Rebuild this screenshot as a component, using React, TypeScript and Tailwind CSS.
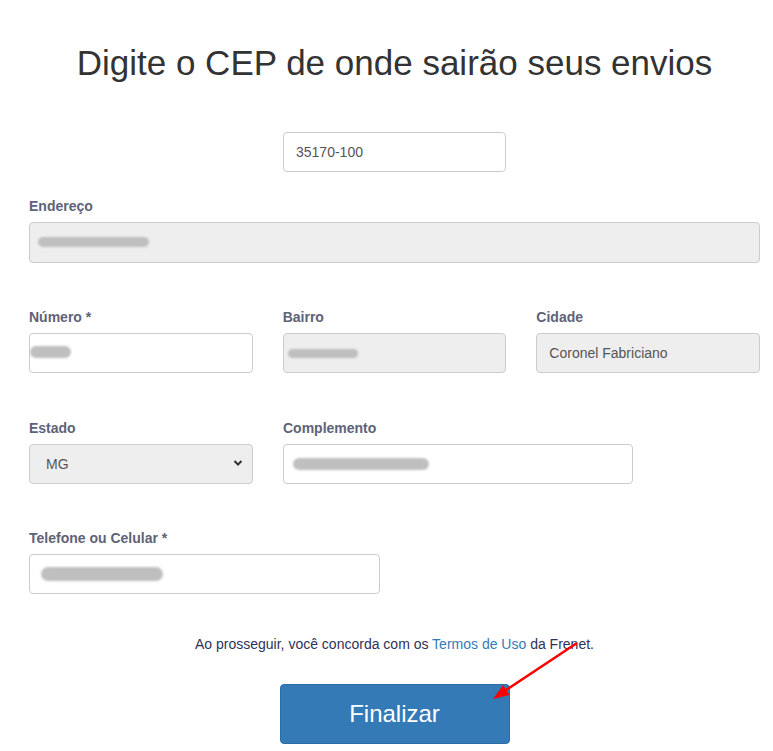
import React from 'react';

// blurred redaction smudge drawn over a field
function Smudge({ className }: { className: string }) {
  return <div className={`absolute rounded-full bg-[#bfbfbf] blur-[1px] ${className}`} />;
}

function Label({ children }: { children: React.ReactNode }) {
  return <label className="block h-[18px] leading-[18px] text-[14px] font-bold text-[#5e6278] mb-[7px]">{children}</label>;
}

function Field({ value, readOnly, className = '', children }: { value?: string; readOnly?: boolean; className?: string; children?: React.ReactNode }) {
  return (
    <div className={`relative h-10 rounded border border-[#cccccc] ${readOnly ? 'bg-[#eeeeee]' : 'bg-white'} ${className}`}>
      {value && <span className="absolute left-[12px] top-0 leading-[38px] text-[14px] text-[#555555]">{value}</span>}
      {children}
    </div>
  );
}

export default function App() {
  return (
    <div className="relative w-[773px] h-[751px] bg-white overflow-hidden font-['Liberation_Sans',Arial,sans-serif]">
      <div className="pl-[29px] pr-[13px]">
        <h1 className="pt-[43px] h-[83px] leading-[40px] text-[35px] text-center text-[#333333]">
          Digite o CEP de onde sairão seus envios
        </h1>

        <div className="mt-[49px] flex justify-center">
          <Field value="35170-100" className="w-[223px]" />
        </div>

        <div className="mt-[25px]">
          <Label>Endereço</Label>
          <Field readOnly className="h-[41px]">
            <Smudge className="left-[8px] top-[14px] w-[111px] h-[10px]" />
          </Field>
        </div>

        <div className="mt-[45px] grid grid-cols-3 gap-x-[30px]">
          <div>
            <Label>Número *</Label>
            <Field>
              <Smudge className="left-0 top-[12px] w-[41px] h-[12px]" />
            </Field>
          </div>
          <div>
            <Label>Bairro</Label>
            <Field readOnly>
              <Smudge className="left-[4px] top-[15px] w-[70px] h-[9px]" />
            </Field>
          </div>
          <div>
            <Label>Cidade</Label>
            <Field readOnly value="Coronel Fabriciano" />
          </div>
        </div>

        <div className="mt-[46px] flex gap-x-[30px]">
          <div className="w-[224px]">
            <Label>Estado</Label>
            <div className="relative">
              <select
                defaultValue="MG"
                className="appearance-none w-full h-10 rounded border border-[#cccccc] bg-[#eeeeee] pl-[16px] text-[14px] text-[#555555] outline-none"
              >
                <option value="MG">MG</option>
              </select>
              <svg className="pointer-events-none absolute right-[10px] top-[15px]" width="10" height="8" viewBox="0 0 10 8">
                <path d="M1.5 2 L5 5.5 L8.5 2" fill="none" stroke="#333" strokeWidth="2" />
              </svg>
            </div>
          </div>
          <div className="w-[350px]">
            <Label>Complemento</Label>
            <Field>
              <Smudge className="left-[9px] top-[13px] w-[136px] h-[12px]" />
            </Field>
          </div>
        </div>

        <div className="mt-[45px] w-[351px]">
          <Label>Telefone ou Celular *</Label>
          <Field>
            <Smudge className="left-[11px] top-[12px] w-[122px] h-[14px]" />
          </Field>
        </div>

        <p className="mt-[41px] h-[18px] leading-[18px] text-center text-[14px] text-[#2e3258]">
          Ao prosseguir, você concorda com os <a className="text-[#337ab7]">Termos de Uso</a> da Frenet.
        </p>

        <div className="mt-[31px] flex justify-center">
          <button className="w-[230px] h-[60px] rounded bg-[#337ab7] border border-[#2e6da4] text-white text-[24px]">
            Finalizar
          </button>
        </div>
      </div>

      {/* red annotation arrow */}
      <svg className="absolute left-0 top-0 pointer-events-none" width="773" height="751">
        <line x1="577" y1="643" x2="503" y2="692" stroke="#ff0000" strokeWidth="2.5" />
        <polygon points="493,699 509.6,695.1 503,685.1" fill="#ff0000" />
      </svg>
    </div>
  );
}
